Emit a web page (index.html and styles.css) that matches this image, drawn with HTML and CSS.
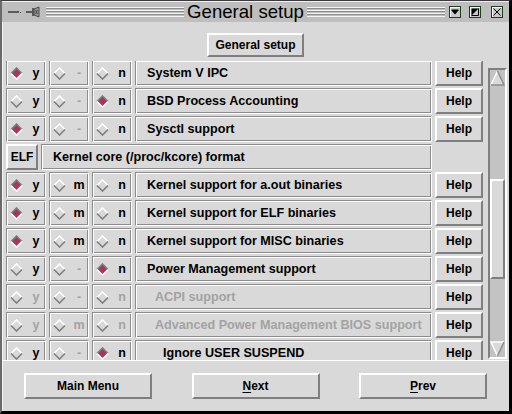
FILE: index.html
```html
<!DOCTYPE html>
<html lang="en">
<head>
<meta charset="UTF-8" />
<title>General setup</title>
<link rel="stylesheet" href="styles.css">
</head>
<body>
<div class="window">
  <div class="titlebar">
    <div class="tb-left">
      <svg width="32" height="14" viewBox="0 0 32 14">
        <rect x="0" y="6" width="11" height="2" fill="#5a5a5a"/>
        <rect x="12" y="7" width="1" height="1" fill="#5a5a5a"/>
        <rect x="18" y="6" width="6" height="2" fill="#5a5a5a"/>
        <rect x="24" y="3" width="2" height="8" fill="#5a5a5a"/>
        <path d="M26 4 L31 2 L31 12 L26 10 Z" fill="#9a9a9a" stroke="#4a4a4a" stroke-width="1"/>
        <path d="M27.5 5 L29.5 9 M29.5 5 L27.5 9" stroke="#4a4a4a" stroke-width="1"/>
      </svg>
    </div>
    <div class="stripes"></div>
    <div class="title">General setup</div>
    <div class="stripes"></div>
    <div class="tb-buttons">
      <span class="tb-btn">
        <svg width="10" height="10" viewBox="0 0 10 10"><path d="M1.5 2.5 H8.5 V3.5 L5 7.5 L1.5 3.5 Z" fill="#000"/></svg>
      </span>
      <span class="tb-btn">
        <svg width="10" height="10" viewBox="0 0 10 10"><path d="M1.5 1.5 H8.5 L1.5 8.5 Z" fill="#000"/><path d="M8.5 1.5 V8.5 H1.5" stroke="#000" fill="none" stroke-width="1"/></svg>
      </span>
      <span class="tb-btn wide">
        <svg width="10" height="10" viewBox="0 0 10 10"><path d="M1.5 1.5 L8.5 8.5 M8.5 1.5 L1.5 8.5" stroke="#000" stroke-width="1"/></svg>
      </span>
    </div>
  </div>

  <div class="content">
    <div class="header">
      <button class="btn raised hdr-btn">General setup</button>
    </div>

    <div class="listarea">
      <div class="list">
        <div class="rows">

          <div class="row">
            <div class="opt groove"><svg class="dia on" viewBox="0 0 13 13"><path class="f" d="M6.5 1 L12 6.5 L6.5 12 L1 6.5Z"/><path class="t" d="M1 6.5 L6.5 1 L12 6.5"/><path class="b" d="M1 6.5 L6.5 12 L12 6.5"/></svg><span>y</span></div>
            <div class="opt groove"><svg class="dia off" viewBox="0 0 13 13"><path class="f" d="M6.5 1 L12 6.5 L6.5 12 L1 6.5Z"/><path class="t" d="M1 6.5 L6.5 1 L12 6.5"/><path class="b" d="M1 6.5 L6.5 12 L12 6.5"/></svg><span class="dim">-</span></div>
            <div class="opt groove"><svg class="dia off" viewBox="0 0 13 13"><path class="f" d="M6.5 1 L12 6.5 L6.5 12 L1 6.5Z"/><path class="t" d="M1 6.5 L6.5 1 L12 6.5"/><path class="b" d="M1 6.5 L6.5 12 L12 6.5"/></svg><span>n</span></div>
            <div class="label groove">System V IPC</div>
            <button class="btn raised help">Help</button>
          </div>

          <div class="row">
            <div class="opt groove"><svg class="dia off" viewBox="0 0 13 13"><path class="f" d="M6.5 1 L12 6.5 L6.5 12 L1 6.5Z"/><path class="t" d="M1 6.5 L6.5 1 L12 6.5"/><path class="b" d="M1 6.5 L6.5 12 L12 6.5"/></svg><span>y</span></div>
            <div class="opt groove"><svg class="dia off" viewBox="0 0 13 13"><path class="f" d="M6.5 1 L12 6.5 L6.5 12 L1 6.5Z"/><path class="t" d="M1 6.5 L6.5 1 L12 6.5"/><path class="b" d="M1 6.5 L6.5 12 L12 6.5"/></svg><span class="dim">-</span></div>
            <div class="opt groove"><svg class="dia on" viewBox="0 0 13 13"><path class="f" d="M6.5 1 L12 6.5 L6.5 12 L1 6.5Z"/><path class="t" d="M1 6.5 L6.5 1 L12 6.5"/><path class="b" d="M1 6.5 L6.5 12 L12 6.5"/></svg><span>n</span></div>
            <div class="label groove">BSD Process Accounting</div>
            <button class="btn raised help">Help</button>
          </div>

          <div class="row">
            <div class="opt groove"><svg class="dia on" viewBox="0 0 13 13"><path class="f" d="M6.5 1 L12 6.5 L6.5 12 L1 6.5Z"/><path class="t" d="M1 6.5 L6.5 1 L12 6.5"/><path class="b" d="M1 6.5 L6.5 12 L12 6.5"/></svg><span>y</span></div>
            <div class="opt groove"><svg class="dia off" viewBox="0 0 13 13"><path class="f" d="M6.5 1 L12 6.5 L6.5 12 L1 6.5Z"/><path class="t" d="M1 6.5 L6.5 1 L12 6.5"/><path class="b" d="M1 6.5 L6.5 12 L12 6.5"/></svg><span class="dim">-</span></div>
            <div class="opt groove"><svg class="dia off" viewBox="0 0 13 13"><path class="f" d="M6.5 1 L12 6.5 L6.5 12 L1 6.5Z"/><path class="t" d="M1 6.5 L6.5 1 L12 6.5"/><path class="b" d="M1 6.5 L6.5 12 L12 6.5"/></svg><span>n</span></div>
            <div class="label groove">Sysctl support</div>
            <button class="btn raised help">Help</button>
          </div>

          <div class="row">
            <button class="btn raised elf">ELF</button>
            <div class="label groove wide">Kernel core (/proc/kcore) format</div>
          </div>

          <div class="row">
            <div class="opt groove"><svg class="dia on" viewBox="0 0 13 13"><path class="f" d="M6.5 1 L12 6.5 L6.5 12 L1 6.5Z"/><path class="t" d="M1 6.5 L6.5 1 L12 6.5"/><path class="b" d="M1 6.5 L6.5 12 L12 6.5"/></svg><span>y</span></div>
            <div class="opt groove"><svg class="dia off" viewBox="0 0 13 13"><path class="f" d="M6.5 1 L12 6.5 L6.5 12 L1 6.5Z"/><path class="t" d="M1 6.5 L6.5 1 L12 6.5"/><path class="b" d="M1 6.5 L6.5 12 L12 6.5"/></svg><span>m</span></div>
            <div class="opt groove"><svg class="dia off" viewBox="0 0 13 13"><path class="f" d="M6.5 1 L12 6.5 L6.5 12 L1 6.5Z"/><path class="t" d="M1 6.5 L6.5 1 L12 6.5"/><path class="b" d="M1 6.5 L6.5 12 L12 6.5"/></svg><span>n</span></div>
            <div class="label groove">Kernel support for a.out binaries</div>
            <button class="btn raised help">Help</button>
          </div>

          <div class="row">
            <div class="opt groove"><svg class="dia on" viewBox="0 0 13 13"><path class="f" d="M6.5 1 L12 6.5 L6.5 12 L1 6.5Z"/><path class="t" d="M1 6.5 L6.5 1 L12 6.5"/><path class="b" d="M1 6.5 L6.5 12 L12 6.5"/></svg><span>y</span></div>
            <div class="opt groove"><svg class="dia off" viewBox="0 0 13 13"><path class="f" d="M6.5 1 L12 6.5 L6.5 12 L1 6.5Z"/><path class="t" d="M1 6.5 L6.5 1 L12 6.5"/><path class="b" d="M1 6.5 L6.5 12 L12 6.5"/></svg><span>m</span></div>
            <div class="opt groove"><svg class="dia off" viewBox="0 0 13 13"><path class="f" d="M6.5 1 L12 6.5 L6.5 12 L1 6.5Z"/><path class="t" d="M1 6.5 L6.5 1 L12 6.5"/><path class="b" d="M1 6.5 L6.5 12 L12 6.5"/></svg><span>n</span></div>
            <div class="label groove">Kernel support for ELF binaries</div>
            <button class="btn raised help">Help</button>
          </div>

          <div class="row">
            <div class="opt groove"><svg class="dia on" viewBox="0 0 13 13"><path class="f" d="M6.5 1 L12 6.5 L6.5 12 L1 6.5Z"/><path class="t" d="M1 6.5 L6.5 1 L12 6.5"/><path class="b" d="M1 6.5 L6.5 12 L12 6.5"/></svg><span>y</span></div>
            <div class="opt groove"><svg class="dia off" viewBox="0 0 13 13"><path class="f" d="M6.5 1 L12 6.5 L6.5 12 L1 6.5Z"/><path class="t" d="M1 6.5 L6.5 1 L12 6.5"/><path class="b" d="M1 6.5 L6.5 12 L12 6.5"/></svg><span>m</span></div>
            <div class="opt groove"><svg class="dia off" viewBox="0 0 13 13"><path class="f" d="M6.5 1 L12 6.5 L6.5 12 L1 6.5Z"/><path class="t" d="M1 6.5 L6.5 1 L12 6.5"/><path class="b" d="M1 6.5 L6.5 12 L12 6.5"/></svg><span>n</span></div>
            <div class="label groove">Kernel support for MISC binaries</div>
            <button class="btn raised help">Help</button>
          </div>

          <div class="row">
            <div class="opt groove"><svg class="dia off" viewBox="0 0 13 13"><path class="f" d="M6.5 1 L12 6.5 L6.5 12 L1 6.5Z"/><path class="t" d="M1 6.5 L6.5 1 L12 6.5"/><path class="b" d="M1 6.5 L6.5 12 L12 6.5"/></svg><span>y</span></div>
            <div class="opt groove"><svg class="dia off" viewBox="0 0 13 13"><path class="f" d="M6.5 1 L12 6.5 L6.5 12 L1 6.5Z"/><path class="t" d="M1 6.5 L6.5 1 L12 6.5"/><path class="b" d="M1 6.5 L6.5 12 L12 6.5"/></svg><span class="dim">-</span></div>
            <div class="opt groove"><svg class="dia on" viewBox="0 0 13 13"><path class="f" d="M6.5 1 L12 6.5 L6.5 12 L1 6.5Z"/><path class="t" d="M1 6.5 L6.5 1 L12 6.5"/><path class="b" d="M1 6.5 L6.5 12 L12 6.5"/></svg><span>n</span></div>
            <div class="label groove">Power Management support</div>
            <button class="btn raised help">Help</button>
          </div>

          <div class="row">
            <div class="opt groove"><svg class="dia off" viewBox="0 0 13 13"><path class="f" d="M6.5 1 L12 6.5 L6.5 12 L1 6.5Z"/><path class="t" d="M1 6.5 L6.5 1 L12 6.5"/><path class="b" d="M1 6.5 L6.5 12 L12 6.5"/></svg><span class="dim">y</span></div>
            <div class="opt groove"><svg class="dia off" viewBox="0 0 13 13"><path class="f" d="M6.5 1 L12 6.5 L6.5 12 L1 6.5Z"/><path class="t" d="M1 6.5 L6.5 1 L12 6.5"/><path class="b" d="M1 6.5 L6.5 12 L12 6.5"/></svg><span class="dim">-</span></div>
            <div class="opt groove"><svg class="dia off" viewBox="0 0 13 13"><path class="f" d="M6.5 1 L12 6.5 L6.5 12 L1 6.5Z"/><path class="t" d="M1 6.5 L6.5 1 L12 6.5"/><path class="b" d="M1 6.5 L6.5 12 L12 6.5"/></svg><span class="dim">n</span></div>
            <div class="label groove dim indent1">ACPI support</div>
            <button class="btn raised help">Help</button>
          </div>

          <div class="row">
            <div class="opt groove"><svg class="dia off" viewBox="0 0 13 13"><path class="f" d="M6.5 1 L12 6.5 L6.5 12 L1 6.5Z"/><path class="t" d="M1 6.5 L6.5 1 L12 6.5"/><path class="b" d="M1 6.5 L6.5 12 L12 6.5"/></svg><span class="dim">y</span></div>
            <div class="opt groove"><svg class="dia off" viewBox="0 0 13 13"><path class="f" d="M6.5 1 L12 6.5 L6.5 12 L1 6.5Z"/><path class="t" d="M1 6.5 L6.5 1 L12 6.5"/><path class="b" d="M1 6.5 L6.5 12 L12 6.5"/></svg><span class="dim">m</span></div>
            <div class="opt groove"><svg class="dia off" viewBox="0 0 13 13"><path class="f" d="M6.5 1 L12 6.5 L6.5 12 L1 6.5Z"/><path class="t" d="M1 6.5 L6.5 1 L12 6.5"/><path class="b" d="M1 6.5 L6.5 12 L12 6.5"/></svg><span class="dim">n</span></div>
            <div class="label groove dim indent1">Advanced Power Management BIOS support</div>
            <button class="btn raised help">Help</button>
          </div>

          <div class="row">
            <div class="opt groove"><svg class="dia off" viewBox="0 0 13 13"><path class="f" d="M6.5 1 L12 6.5 L6.5 12 L1 6.5Z"/><path class="t" d="M1 6.5 L6.5 1 L12 6.5"/><path class="b" d="M1 6.5 L6.5 12 L12 6.5"/></svg><span>y</span></div>
            <div class="opt groove"><svg class="dia off" viewBox="0 0 13 13"><path class="f" d="M6.5 1 L12 6.5 L6.5 12 L1 6.5Z"/><path class="t" d="M1 6.5 L6.5 1 L12 6.5"/><path class="b" d="M1 6.5 L6.5 12 L12 6.5"/></svg><span class="dim">-</span></div>
            <div class="opt groove"><svg class="dia on" viewBox="0 0 13 13"><path class="f" d="M6.5 1 L12 6.5 L6.5 12 L1 6.5Z"/><path class="t" d="M1 6.5 L6.5 1 L12 6.5"/><path class="b" d="M1 6.5 L6.5 12 L12 6.5"/></svg><span>n</span></div>
            <div class="label groove indent2">Ignore USER SUSPEND</div>
            <button class="btn raised help">Help</button>
          </div>

        </div>
      </div>

      <div class="scrollbar">
        <svg class="arrow" width="15" height="16" viewBox="0 0 15 16">
          <path d="M7.5 1 L14 15 L1 15 Z" fill="#d9d9d9"/>
          <path d="M1 15 L7.5 1" stroke="#fff" stroke-width="1.5" fill="none"/>
          <path d="M7.5 1 L14 15 L1 15" stroke="#8c8c8c" stroke-width="1.5" fill="none"/>
        </svg>
        <div class="trough">
          <div class="thumb"></div>
        </div>
        <svg class="arrow" width="15" height="16" viewBox="0 0 15 16">
          <path d="M1 1 L14 1 L7.5 15 Z" fill="#d9d9d9"/>
          <path d="M7.5 15 L1 1 L14 1" stroke="#fff" stroke-width="1.5" fill="none"/>
          <path d="M14 1 L7.5 15" stroke="#8c8c8c" stroke-width="1.5" fill="none"/>
        </svg>
      </div>
    </div>

    <div class="footer">
      <button class="btn raised nav">Main Menu</button>
      <button class="btn raised nav"><u>N</u>ext</button>
      <button class="btn raised nav"><u>P</u>rev</button>
    </div>
  </div>
</div>
</body>
</html>
```

FILE: styles.css
```css
* {
  box-sizing: border-box;
}

body {
  margin: 0;
  background: #000;
  font-family: "Liberation Sans", Helvetica, Arial, sans-serif;
}

/* Window frame */
.window {
  width: 512px;
  height: 414px;
  display: flex;
  flex-direction: column;
  background: #d9d9d9;
  border-top: 1px solid #3a3a3a;
  border-left: 2px solid #6a6a6a;
  border-right: 3px solid #000;
  border-bottom: 3px solid #000;
  box-shadow: inset 1px 0 0 #f4f4f4;
}

.titlebar {
  height: 21px;
  display: flex;
  align-items: center;
  background: #bebebe;
  border-top: 1px solid #f0f0f0;
}

.tb-left {
  margin-left: 6px;
  width: 32px;
  height: 14px;
  display: flex;
}

.stripes {
  flex: 1;
  height: 10px;
  margin-left: 6px;
  background: repeating-linear-gradient(to bottom, #f4f4f4 0 1px, #8c8c8c 1px 2px, #bebebe 2px 3px);
}

.stripes + .title + .stripes {
  margin-left: 0;
}

.title {
  padding: 0 3px;
  font-size: 18.6px;
  line-height: 20px;
  color: #000;
  white-space: nowrap;
}

.tb-buttons {
  display: flex;
  gap: 8px;
  margin-left: 4px;
  margin-right: 6px;
}

.tb-btn {
  width: 12px;
  height: 12px;
  display: flex;
  align-items: center;
  justify-content: center;
  border: 1px solid #1d3f1d;
  background: #c8c8c8;
  box-shadow: inset 1px 1px 0 #f4f4f4;
}

.tb-btn.wide {
  margin-left: 2px;
}

/* Main area */
.content {
  flex: 1;
  display: flex;
  flex-direction: column;
}

.btn {
  font-family: inherit;
  font-size: 12px;
  font-weight: 700;
  color: #000;
  background: #d9d9d9;
  padding: 0;
  margin: 0;
}

.raised {
  border: 2px solid;
  border-color: #fff #7f7f7f #7f7f7f #fff;
}

.groove {
  border: 1px solid;
  border-color: #8c8c8c #fff #fff #8c8c8c;
  box-shadow: inset 1px 1px 0 #fff, inset -1px -1px 0 #8c8c8c;
}

.header {
  height: 39px;
  display: flex;
  justify-content: center;
  padding-top: 11px;
}

.hdr-btn {
  width: 97px;
  height: 24px;
}

.listarea {
  height: 299px;
  display: flex;
}

.list {
  width: 485px;
  overflow: hidden;
}

.rows {
  margin-top: -1px;
  padding-left: 4px;
}

.row {
  height: 26px;
  margin-bottom: 2px;
  display: flex;
  gap: 3px;
}

.opt {
  width: 40px;
  display: flex;
  align-items: center;
  padding-left: 3px;
  font-size: 12.5px;
  font-weight: 700;
  color: #000;
}

.opt span {
  flex: 1;
  text-align: center;
  padding-left: 4px;
}

.dia {
  width: 13px;
  height: 13px;
  flex: none;
}

.dia .t,
.dia .b {
  fill: none;
  stroke-width: 1.6;
}

.dia.on .f { fill: #b03060; }
.dia.on .t { stroke: #7f7f7f; }
.dia.on .b { stroke: #fff; }

.dia.off .f { fill: #d9d9d9; }
.dia.off .t { stroke: #fff; }
.dia.off .b { stroke: #7f7f7f; }

.dim {
  color: #a3a3a3;
}

.label {
  width: 297px;
  display: flex;
  align-items: center;
  padding-left: 11px;
  font-size: 12.6px;
  font-weight: 700;
  white-space: nowrap;
  color: #000;
}

.label.dim {
  color: #a3a3a3;
}

.label.wide {
  width: 391px;
}

.indent1 {
  padding-left: 19px;
}

.indent2 {
  padding-left: 27px;
}

.help {
  width: 48px;
  height: 26px;
}

.elf {
  width: 32px;
  height: 26px;
}

/* Scrollbar */
.scrollbar {
  width: 19px;
  height: 291px;
  margin-top: 7px;
  margin-left: 1px;
  display: flex;
  flex-direction: column;
  align-items: center;
  background: #c3c3c3;
  border: 2px solid;
  border-color: #7f7f7f #fff #fff #7f7f7f;
}

.arrow {
  flex: none;
}

.trough {
  flex: 1;
  width: 100%;
  padding-top: 93px;
}

.thumb {
  height: 100px;
  background: #d9d9d9;
  border: 2px solid;
  border-color: #fff #7f7f7f #7f7f7f #fff;
}

/* Bottom buttons */
.footer {
  flex: 1;
  display: flex;
  justify-content: space-between;
  padding: 12px 22px 0;
  border-top: 1px solid #fff;
}

.nav {
  width: 128px;
  height: 26px;
}

.nav u {
  text-decoration-thickness: 1px;
  text-underline-offset: 2px;
}
```
